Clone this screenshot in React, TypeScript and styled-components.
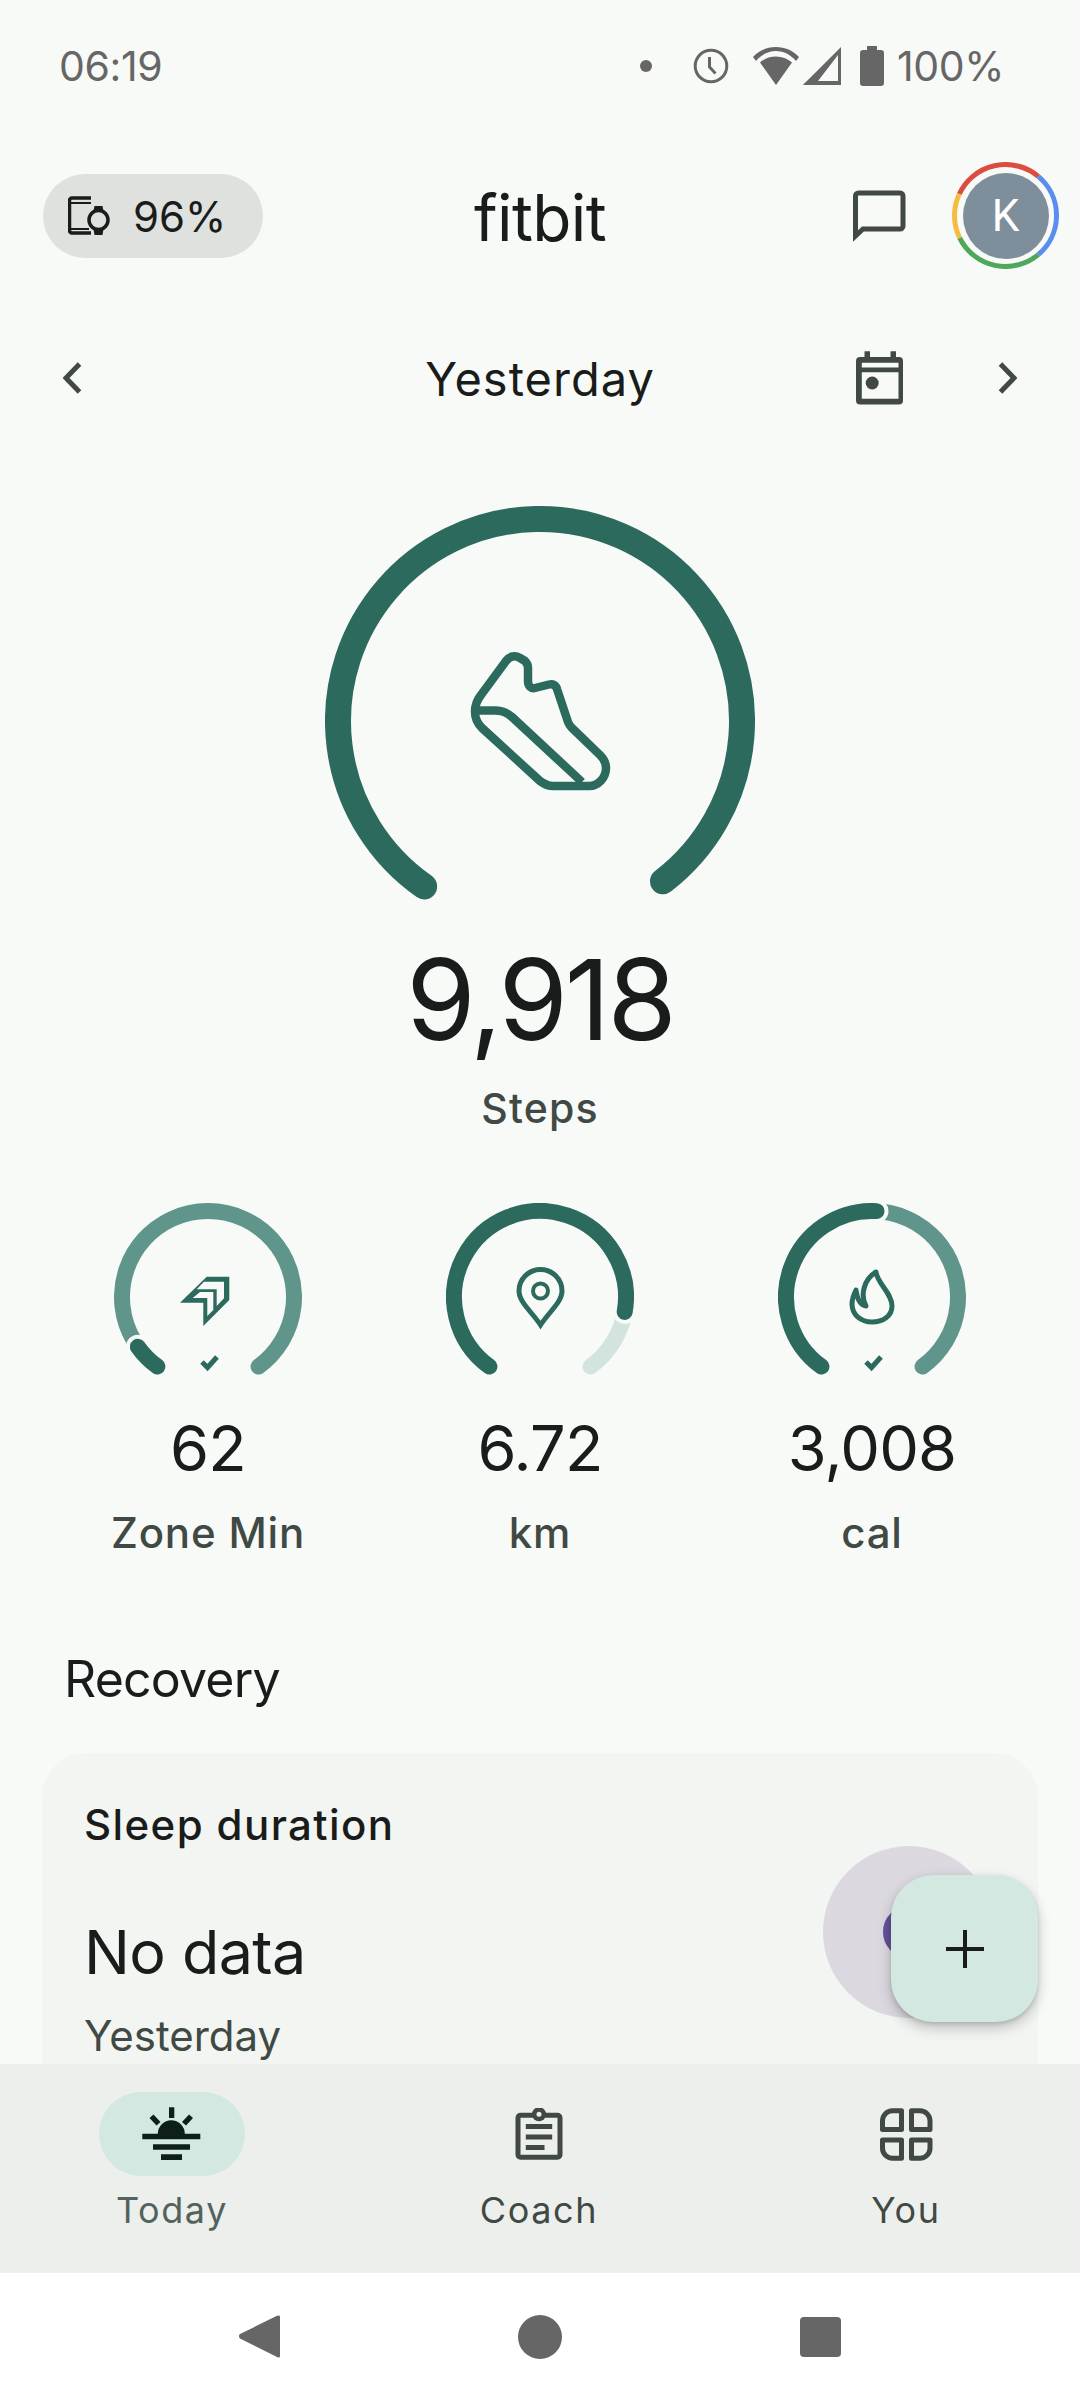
import React from 'react'
import styled, { createGlobalStyle } from 'styled-components'

const GREEN = '#2d6a5e'
const MID = '#5f958a'
const PALE = '#d3e4de'
const BG = '#f8faf7'
const INK = '#191c1a'
const GREY = '#404943'
const MINT = '#d2e8e1'

const GlobalStyle = createGlobalStyle`
  html, body { margin: 0; padding: 0; background: ${BG}; }
  body { font-family: Inter, "Open Sans", sans-serif; color: ${INK}; }
  svg { display: block; flex: none; }
`

// angles are clockwise from twelve o'clock
const arc = (cx: number, cy: number, r: number, from: number, to: number) => {
  const pt = (a: number) => {
    const t = (a * Math.PI) / 180
    return `${(cx + r * Math.sin(t)).toFixed(2)} ${(cy - r * Math.cos(t)).toFixed(2)}`
  }
  return `M${pt(from)} A${r} ${r} 0 ${to - from > 180 ? 1 : 0} 1 ${pt(to)}`
}

const Page = styled.div`
  width: 1080px;
  height: 2400px;
  display: flex;
  flex-direction: column;
  overflow: hidden;
  background: ${BG};
`
const Scroll = styled.main`
  position: relative;
  height: 2064px;
  flex: none;
  overflow: hidden;
`
const StatusBar = styled.div`
  height: 132px;
  padding: 0 76px 0 59px;
  display: flex;
  align-items: center;
  color: #666;
  font-size: 41px;
  letter-spacing: -0.4px;
`
const StatusRight = styled.div`
  margin-left: auto;
  display: flex;
  align-items: center;
`
const Dot = styled.span`
  width: 12px;
  height: 12px;
  border-radius: 50%;
  background: #666;
  margin-right: 41px;
`
const StatusGlyph = styled.span<{ $after: number }>`
  display: block;
  margin-right: ${p => p.$after}px;
`
const Header = styled.header`
  height: 170px;
  position: relative;
  display: flex;
  align-items: center;
  justify-content: center;
`
const Pill = styled.div`
  position: absolute;
  left: 43px;
  top: 42px;
  width: 220px;
  height: 84px;
  border-radius: 42px;
  background: #dfe1df;
  display: flex;
  align-items: center;
  gap: 21px;
  padding-left: 25px;
  box-sizing: border-box;
  font-size: 42px;
`
const Logo = styled.h1`
  margin: 0;
  font-size: 64px;
  font-weight: 400;
  letter-spacing: -0.6px;
`
const HeaderRight = styled.div`
  position: absolute;
  left: 853px;
  top: 30px;
  display: flex;
  align-items: center;
  gap: 46px;
`
const Avatar = styled.div`
  position: relative;
  width: 107px;
  height: 107px;
  display: flex;
  align-items: center;
  justify-content: center;
`
const AvatarFace = styled.div`
  width: 86px;
  height: 86px;
  border-radius: 50%;
  background: #7e8f9b;
  color: #fff;
  display: flex;
  align-items: center;
  justify-content: center;
  font-family: Roboto, sans-serif;
  font-size: 44px;
`
const AvatarRing = styled.svg`
  position: absolute;
  inset: 0;
`
const DateRow = styled.div`
  height: 152px;
  position: relative;
  display: flex;
  align-items: center;
  justify-content: center;
  font-size: 47px;
  letter-spacing: 1px;
`
const DateIcon = styled.span<{ $left: number }>`
  position: absolute;
  left: ${p => p.$left}px;
  top: 50%;
  transform: translateY(-50%);
`
const Hero = styled.section`
  margin-top: 52px;
  display: flex;
  flex-direction: column;
  align-items: center;
`
const HeroValue = styled.div`
  margin-top: 18px;
  font-size: 112px;
  line-height: 150px;
  font-weight: 400;
  letter-spacing: -3px;
`
const HeroLabel = styled.div`
  margin-top: 4px;
  font-size: 41px;
  line-height: 60px;
  font-weight: 500;
  color: ${GREY};
  letter-spacing: 1.2px;
`
const Stats = styled.section`
  margin-top: 65px;
  display: flex;
  justify-content: space-between;
  padding: 0 114px;
`
const Stat = styled.div`
  width: 188px;
  display: flex;
  flex-direction: column;
  align-items: center;
  white-space: nowrap;
`
const StatValue = styled.div`
  margin-top: 22px;
  font-size: 63px;
  line-height: 86px;
  font-weight: 400;
  letter-spacing: -0.8px;
`
const StatLabel = styled.div`
  margin-top: 14px;
  font-size: 42px;
  line-height: 56px;
  font-weight: 500;
  color: ${GREY};
  letter-spacing: 0.8px;
`
const SectionTitle = styled.h2`
  margin: 86px 0 0 64px;
  font-size: 50px;
  line-height: 64px;
  font-weight: 400;
  letter-spacing: -0.8px;
`
const Card = styled.article`
  margin: 42px 42px 0;
  height: 400px;
  border-radius: 44px;
  background: #f3f5f2;
  padding: 42px 43px 0 42px;
  box-sizing: border-box;
  display: flex;
  justify-content: space-between;
`
const CardTitle = styled.div`
  font-size: 42px;
  line-height: 60px;
  font-weight: 500;
  letter-spacing: 1.4px;
`
const CardValue = styled.div`
  margin-top: 55px;
  font-size: 61px;
  line-height: 84px;
  font-weight: 400;
  letter-spacing: -0.6px;
`
const CardSub = styled.div`
  margin-top: 17px;
  font-size: 42px;
  line-height: 50px;
  color: ${GREY};
  font-weight: 400;
`
const SleepBadge = styled.div`
  margin-top: 51px;
  width: 172px;
  height: 172px;
  border-radius: 50%;
  background: #dbd9df;
  display: flex;
  align-items: center;
  justify-content: center;
`
const SleepRing = styled.div`
  width: 36px;
  height: 36px;
  border: 8px solid #65509a;
  border-radius: 50%;
`
const Fab = styled.button`
  position: absolute;
  left: 891px;
  top: 1875px;
  width: 147px;
  height: 147px;
  border: 0;
  border-radius: 42px;
  background: ${MINT};
  box-shadow: 0 6px 14px rgba(0, 0, 0, 0.22), 0 2px 4px rgba(0, 0, 0, 0.12);
  display: flex;
  align-items: center;
  justify-content: center;
  padding: 0;
`
const Nav = styled.nav`
  height: 209px;
  flex: none;
  background: #edefec;
  padding: 28px 101px 0 99px;
  box-sizing: border-box;
  display: flex;
  justify-content: space-between;
`
const Tab = styled.div`
  width: 146px;
  display: flex;
  flex-direction: column;
  align-items: center;
`
const TabIcon = styled.div<{ $active?: boolean }>`
  width: 146px;
  height: 84px;
  border-radius: 42px;
  background: ${p => (p.$active ? MINT : 'transparent')};
  display: flex;
  align-items: center;
  justify-content: center;
`
const TabLabel = styled.div<{ $active?: boolean }>`
  margin-top: 8px;
  font-size: 36px;
  line-height: 52px;
  font-weight: 400;
  letter-spacing: 1.6px;
  white-space: nowrap;
  color: ${p => (p.$active ? '#51635c' : GREY)};
`
const SystemNav = styled.div`
  flex: 1;
  background: #fff;
  display: flex;
  align-items: center;
  justify-content: center;
  gap: 238px;
`
const HomeKey = styled.span`
  width: 44px;
  height: 44px;
  border-radius: 50%;
  background: #666;
`
const RecentKey = styled.span`
  width: 41px;
  height: 40px;
  border-radius: 4px;
  background: #666;
`

const ClockIcon = () => (
  <svg width="36" height="36" viewBox="0 0 36 36" fill="none" stroke="#666" strokeWidth="3">
    <circle cx="18" cy="18" r="15.8" />
    <path d="M16.500 9v10l6 6.500" />
  </svg>
)
const WifiIcon = () => (
  <svg width="46" height="38" viewBox="0 0 46 38" fill="#666">
    <path d="M23 38 7 15.500C11.500 11.500 17 9.500 23 9.500s11.500 2 16 6Z" />
    <path d="M23 0C14 0 6 3.500 0 10l3 4C8 8 15 4 23 4s15 4 20 10l3-4C40 3.500 32 0 23 0Z" />
  </svg>
)
const SignalIcon = () => (
  <svg width="38" height="38" viewBox="0 0 38 38" fill="#666">
    <path fillRule="evenodd" d="M38 0v38H0ZM35 8 15 34h20Z" />
    <path d="M15 34 0 38 15 24Z" />
  </svg>
)
const BatteryIcon = () => (
  <svg width="24" height="40" viewBox="0 0 24 40" fill="#666">
    <path d="M7 0h10v4h4a3 3 0 0 1 3 3v30a3 3 0 0 1-3 3H3a3 3 0 0 1-3-3V7a3 3 0 0 1 3-3h4Z" />
  </svg>
)
const DevicesIcon = () => (
  <svg width="44" height="40" viewBox="68 197 44 40" fill="none" stroke={INK} strokeWidth="3.500">
    <path d="M91 199H72a2.500 2.500 0 0 0-2.500 2.500v30a2.500 2.500 0 0 0 2.500 2.500h19" />
    <path d="M70 204h21M70 230h19" strokeWidth="2" />
    <circle cx="98.500" cy="221" r="9.500" />
    <path d="M94.500 207h8l1 5h-10ZM93.500 230h10l-1 6h-8Z" fill={INK} stroke="none" />
  </svg>
)
const ChatIcon = () => (
  <svg width="53" height="52" viewBox="0 0 53 52" fill="none" stroke={GREY} strokeWidth="5">
    <path d="M2.500 46V6a3 3 0 0 1 3-3H47a3 3 0 0 1 3 3v30a3 3 0 0 1-3 3H10Z" />
  </svg>
)
const CalendarIcon = () => (
  <svg width="48" height="54" viewBox="856.500 351.500 48 54">
    <path
      fill={GREY}
      d="M865 351.700h5.500v5.800h20.500v-5.800h5.500v5.800h3a4 4 0 0 1 4 4V401a4 4 0 0 1-4 4h-39a4 4 0 0 1-4-4v-39.500a4 4 0 0 1 4-4h4.500Z"
    />
    <path fill={BG} d="M862.300 363.300H899v4.700h-36.700ZM862.300 372.700H899v26.600h-36.700Z" />
    <circle cx="872.700" cy="383.500" r="6.500" fill={GREY} />
  </svg>
)
const Chevron = ({ flip }: { flip?: boolean }) => (
  <svg width="20" height="32" viewBox="0 0 20 32" fill="none" stroke={GREY} strokeWidth="5">
    <path d={flip ? 'M16.500 2 3 16l13.500 14' : 'M3.500 2 17 16 3.500 30'} />
  </svg>
)

const ShoeIcon = () => (
  <g fill="none" stroke={GREEN} strokeWidth="8.500" strokeLinejoin="round">
    <path d="M481 695L506 661C510 656 515 655 520 658L525 661C527 663 528 665 528 668V681C528 686 531 689 535 688L549 684.500C553 683.500 556 685 557 689L568 722C569 725 570 726 572 728L600 755C604 759 606 763 606 768C606 778 598 786 589 786H553C548 786 544 784 540 781L482 728C478 724 475 718 475 712C475 706 477 700 481 695Z" />
    <path d="M477 710.500H495C502 710.500 507 712.500 512 717L582 782" />
  </g>
)
const ZoneIcon = () => (
  <g>
    <path fill={GREEN} d="M180 1302.700 206.700 1276.700H229.300V1300L203.300 1326V1302.700Z" />
    <path fill={BG} d="M204 1281.700H224V1298.300L216.700 1306V1289.300H196.700Z" />
    <path fill={BG} d="M192.700 1298 200 1292H213.300V1310L207.300 1316V1298Z" />
  </g>
)
const PinIcon = () => (
  <g fill="none" stroke={GREEN} strokeWidth="5">
    <path d="M540.500 1325C532 1312 519 1302 519 1291A21.500 21.500 0 0 1 562 1291C562 1302 549 1312 540.500 1325Z" />
    <circle cx="540.500" cy="1291" r="7.500" strokeWidth="4" />
  </g>
)
const FlameIcon = () => (
  <g fill="none" stroke={GREEN} strokeWidth="5" strokeLinejoin="round">
    <path d="M876 1272C877 1283 892 1293 892 1306C892 1316 883 1322 872 1322C861 1322 852 1315 852 1304C852 1299 854 1294 856 1290C857 1298 860 1305 866 1306C860 1295 864 1279 876 1272Z" />
  </g>
)
const Tick = ({ x }: { x: number }) => (
  <path
    d={`M${x - 6} 1362l5.500 5.500 9.500-10.500`}
    fill="none"
    stroke={GREEN}
    strokeWidth="5"
  />
)

type Segment = { from: number; to: number; color: string; halo?: boolean }

const SmallGauge = ({ cx, segments, children }: { cx: number; segments: Segment[]; children: React.ReactNode }) => (
  <svg width="188" height="180" viewBox={`${cx - 94} 1203 188 180`} fill="none">
    {segments.map((s, i) => (
      <React.Fragment key={i}>
        {s.halo && <path d={arc(cx, 1297, 86, s.from, s.to)} stroke={BG} strokeWidth="24" strokeLinecap="round" />}
        <path d={arc(cx, 1297, 86, s.from, s.to)} stroke={s.color} strokeWidth="16" strokeLinecap="round" />
      </React.Fragment>
    ))}
    {children}
  </svg>
)

const TodayIcon = () => (
  <svg width="60" height="54" viewBox="143 2105 60 54" fill="#0e1f1a">
    <path d="M143.300 2131.700h15.500a13.500 13.500 0 0 1 27 0h15.500v5.600h-58ZM154 2142.300h37v5.400h-37ZM162 2152.300h21v5.700h-21ZM170 2105.300h5.300V2116H170Z" />
    <path d="M154.500 2112.500l7 7.500-4 3.500-7-7.500ZM190 2112.500l-7 7.500 4 3.500 7-7.500Z" />
  </svg>
)
const CoachIcon = () => (
  <svg width="48" height="52" viewBox="515.500 2105.700 48 52" fill="none" stroke={GREY} strokeWidth="5">
    <rect x="518.500" y="2113" width="42" height="42" rx="2.500" />
    <circle cx="539.500" cy="2112" r="7" fill={GREY} stroke="none" />
    <circle cx="539.500" cy="2112" r="2.500" fill="#edefec" stroke="none" />
    <path d="M526.300 2124.300h26.400M526.300 2134.700h26.400M526.300 2145.200h18.700" />
  </svg>
)
const YouIcon = () => (
  <svg width="53" height="53" viewBox="880 2108 53 53" fill="none" stroke={GREY} strokeWidth="5" strokeLinejoin="round">
    <path d="M892.500 2110.800H901.500V2129.500H882.500V2120.800A10 10 0 0 1 892.500 2110.800Z" />
    <path d="M911.500 2110.800H920A10 10 0 0 1 930 2120.800V2129.500H911.500Z" />
    <path d="M882.500 2140H901.500V2158.200H892.500A10 10 0 0 1 882.500 2148.200Z" />
    <path d="M911.500 2140H930V2148.200A10 10 0 0 1 920 2158.200H911.500Z" />
  </svg>
)

const App = () => (
  <Page>
    <GlobalStyle />
    <Scroll>
      <StatusBar>
        06:19
        <StatusRight>
          <Dot />
          <StatusGlyph $after={24}><ClockIcon /></StatusGlyph>
          <StatusGlyph $after={4}><WifiIcon /></StatusGlyph>
          <StatusGlyph $after={19}><SignalIcon /></StatusGlyph>
          <StatusGlyph $after={13}><BatteryIcon /></StatusGlyph>
          100%
        </StatusRight>
      </StatusBar>

      <Header>
        <Pill>
          <DevicesIcon />
          96%
        </Pill>
        <Logo>fitbit</Logo>
        <HeaderRight>
          <ChatIcon />
          <Avatar>
            <AvatarFace>K</AvatarFace>
            <AvatarRing width="107" height="107" viewBox="0 0 107 107" fill="none" strokeWidth="5">
              <path d={arc(53.5, 53.5, 51, -65, 40)} stroke="#db4d3f" />
              <path d={arc(53.5, 53.5, 51, 40, 140)} stroke="#5b8def" />
              <path d={arc(53.5, 53.5, 51, 140, 244)} stroke="#4fa85a" />
              <path d={arc(53.5, 53.5, 51, 244, 295)} stroke="#f4bd42" />
            </AvatarRing>
          </Avatar>
        </HeaderRight>
      </Header>

      <DateRow>
        <DateIcon $left={63}><Chevron flip /></DateIcon>
        Yesterday
        <DateIcon $left={856}><CalendarIcon /></DateIcon>
        <DateIcon $left={997}><Chevron /></DateIcon>
      </DateRow>

      <Hero>
        <svg width="430" height="400" viewBox="325 506 430 400" fill="none">
          <path d={arc(540, 721, 202, -145, 142.5)} stroke={GREEN} strokeWidth="26" strokeLinecap="round" />
          <ShoeIcon />
        </svg>
        <HeroValue>9,918</HeroValue>
        <HeroLabel>Steps</HeroLabel>
      </Hero>

      <Stats>
        <Stat>
          <SmallGauge
            cx={208}
            segments={[
              { from: -144, to: 144, color: MID },
              { from: -144, to: -125.4, color: GREEN, halo: true },
            ]}
          >
            <ZoneIcon />
            <Tick x={208} />
          </SmallGauge>
          <StatValue>62</StatValue>
          <StatLabel>Zone Min</StatLabel>
        </Stat>
        <Stat>
          <SmallGauge
            cx={540}
            segments={[
              { from: -144, to: 144, color: PALE },
              { from: -144, to: 100, color: GREEN, halo: true },
            ]}
          >
            <PinIcon />
          </SmallGauge>
          <StatValue>6.72</StatValue>
          <StatLabel>km</StatLabel>
        </Stat>
        <Stat>
          <SmallGauge
            cx={872}
            segments={[
              { from: -144, to: 144, color: MID },
              { from: -144, to: 3, color: GREEN, halo: true },
            ]}
          >
            <FlameIcon />
            <Tick x={872} />
          </SmallGauge>
          <StatValue>3,008</StatValue>
          <StatLabel>cal</StatLabel>
        </Stat>
      </Stats>

      <SectionTitle>Recovery</SectionTitle>
      <Card>
        <div>
          <CardTitle>Sleep duration</CardTitle>
          <CardValue>No data</CardValue>
          <CardSub>Yesterday</CardSub>
        </div>
        <SleepBadge>
          <SleepRing />
        </SleepBadge>
      </Card>

      <Fab aria-label="Add">
        <svg width="38" height="38" viewBox="0 0 38 38" fill="none" stroke={INK} strokeWidth="4">
          <path d="M19 0v38M0 19h38" />
        </svg>
      </Fab>
    </Scroll>

    <Nav>
      <Tab>
        <TabIcon $active><TodayIcon /></TabIcon>
        <TabLabel $active>Today</TabLabel>
      </Tab>
      <Tab>
        <TabIcon><CoachIcon /></TabIcon>
        <TabLabel>Coach</TabLabel>
      </Tab>
      <Tab>
        <TabIcon><YouIcon /></TabIcon>
        <TabLabel>You</TabLabel>
      </Tab>
    </Nav>

    <SystemNav>
      <svg width="41" height="45" viewBox="0 0 41 45" fill="#666">
        <path d="M40 1.500a1.500 1.500 0 0 1 1 1.500v39a1.500 1.500 0 0 1-2.500 1.200L1 24.500a3 3 0 0 1 0-4.500L38 1.800Z" />
      </svg>
      <HomeKey />
      <RecentKey />
    </SystemNav>
  </Page>
)

export default App
